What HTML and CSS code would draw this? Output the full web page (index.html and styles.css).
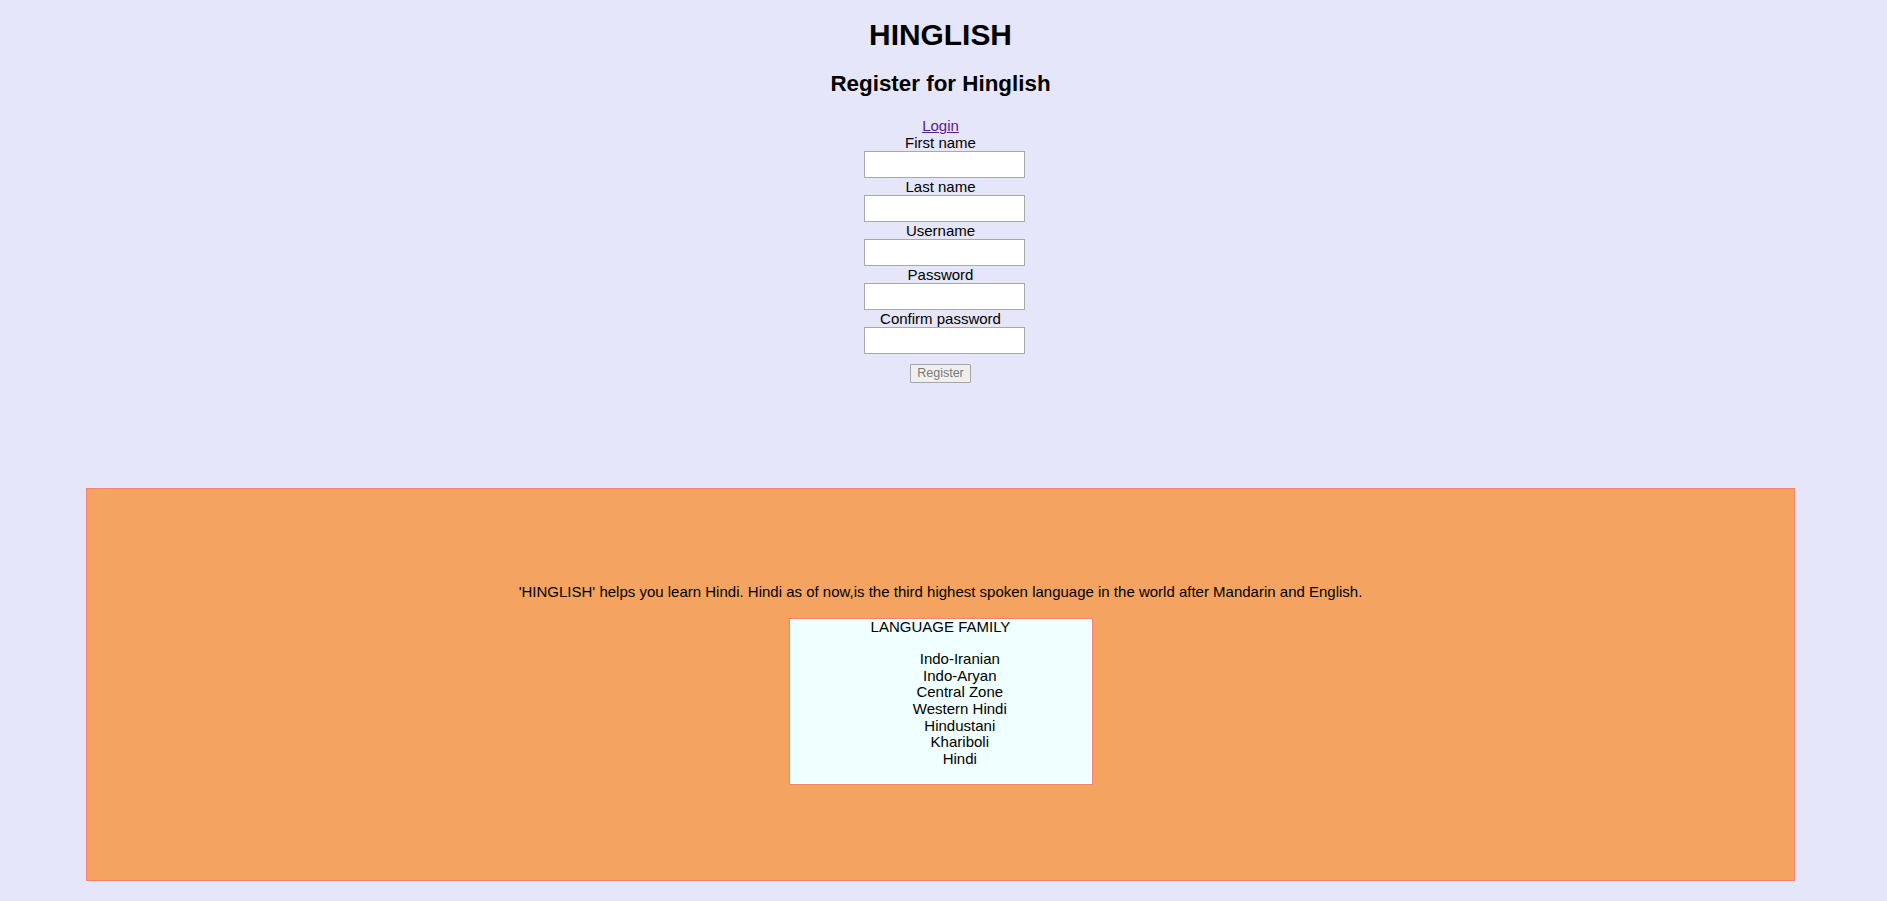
FILE: index.html
```html
<!DOCTYPE html>
<html lang="en">
<head>
<meta charset="utf-8">
<title>HINGLISH</title>
<link rel="stylesheet" href="styles.css">
</head>
<body>
<div class="page">
  <h1 class="title">HINGLISH</h1>
  <h2 class="subtitle">Register for Hinglish</h2>
  <div class="login"><a href="#" class="login-link">Login</a></div>
  <form class="reg-form">
    <label class="field-label" for="fn">First name</label>
    <input class="field-input" id="fn" type="text">
    <label class="field-label" for="ln">Last name</label>
    <input class="field-input" id="ln" type="text">
    <label class="field-label" for="un">Username</label>
    <input class="field-input" id="un" type="text">
    <label class="field-label" for="pw">Password</label>
    <input class="field-input" id="pw" type="password">
    <label class="field-label" for="cpw">Confirm password</label>
    <input class="field-input" id="cpw" type="password">
    <button class="reg-button" type="submit" disabled>Register</button>
  </form>
  <section class="info">
    <p class="info-text">'HINGLISH' helps you learn Hindi. Hindi as of now,is the third highest spoken language in the world after Mandarin and English.</p>
    <div class="family">
      <div class="family-title">LANGUAGE FAMILY</div>
      <ul class="family-list">
        <li>Indo-Iranian</li>
        <li>Indo-Aryan</li>
        <li>Central Zone</li>
        <li>Western Hindi</li>
        <li>Hindustani</li>
        <li>Khariboli</li>
        <li>Hindi</li>
      </ul>
    </div>
  </section>
</div>
</body>
</html>
```
FILE: styles.css
```css
html, body {
  margin: 0;
  background: #e6e6fa;
}
body {
  font-family: "Liberation Sans", Arial, sans-serif;
  font-size: 15px;
  color: #000;
}
.page {
  padding: 18px 14px 0 8px;
}
.title {
  margin: 0;
  font-size: 29.9px;
  line-height: 34px;
  font-weight: bold;
  text-align: center;
}
.subtitle {
  margin: 19.4px 0 0;
  font-size: 22.4px;
  line-height: 26px;
  font-weight: bold;
  text-align: center;
}
.login {
  margin-top: 20px;
  line-height: 17px;
  text-align: center;
}
.login-link {
  color: #551a8b;
  text-decoration: underline;
}
.reg-form {
  display: flex;
  flex-direction: column;
  align-items: center;
  margin: 0;
}
.field-label {
  display: block;
  line-height: 17px;
  text-align: center;
}
.field-input {
  box-sizing: border-box;
  width: 161px;
  height: 27px;
  margin: 0 0 0 8px;
  border: 1px solid #a9a9a9;
  background: #fff;
  padding: 1px 2px;
  font: inherit;
}
.reg-button {
  box-sizing: border-box;
  margin-top: 9.3px;
  width: 61px;
  height: 19px;
  padding: 0;
  font-family: "Liberation Sans", Arial, sans-serif;
  font-size: 12.5px;
  color: #7a7a7a;
  background: #efefef;
  border: 1px solid #a6a6a6;
  border-radius: 1px;
}
.info {
  margin: 105px 78px 0;
  background: #f4a460;
  border: 1px solid #fa8072;
  padding: 95px 0 95px;
  text-align: center;
}
.info-text {
  margin: 0 0 17px;
  line-height: 16.9px;
}
.family {
  box-sizing: border-box;
  width: 304px;
  height: 167px;
  margin: 0 auto;
  background: #f0ffff;
  border: 1px solid #fa8072;
}
.family-title {
  line-height: 16.9px;
}
.family-list {
  list-style: none;
  margin: 15.4px 0 0;
  padding: 0 0 0 38.6px;
  line-height: 16.7px;
}
```
